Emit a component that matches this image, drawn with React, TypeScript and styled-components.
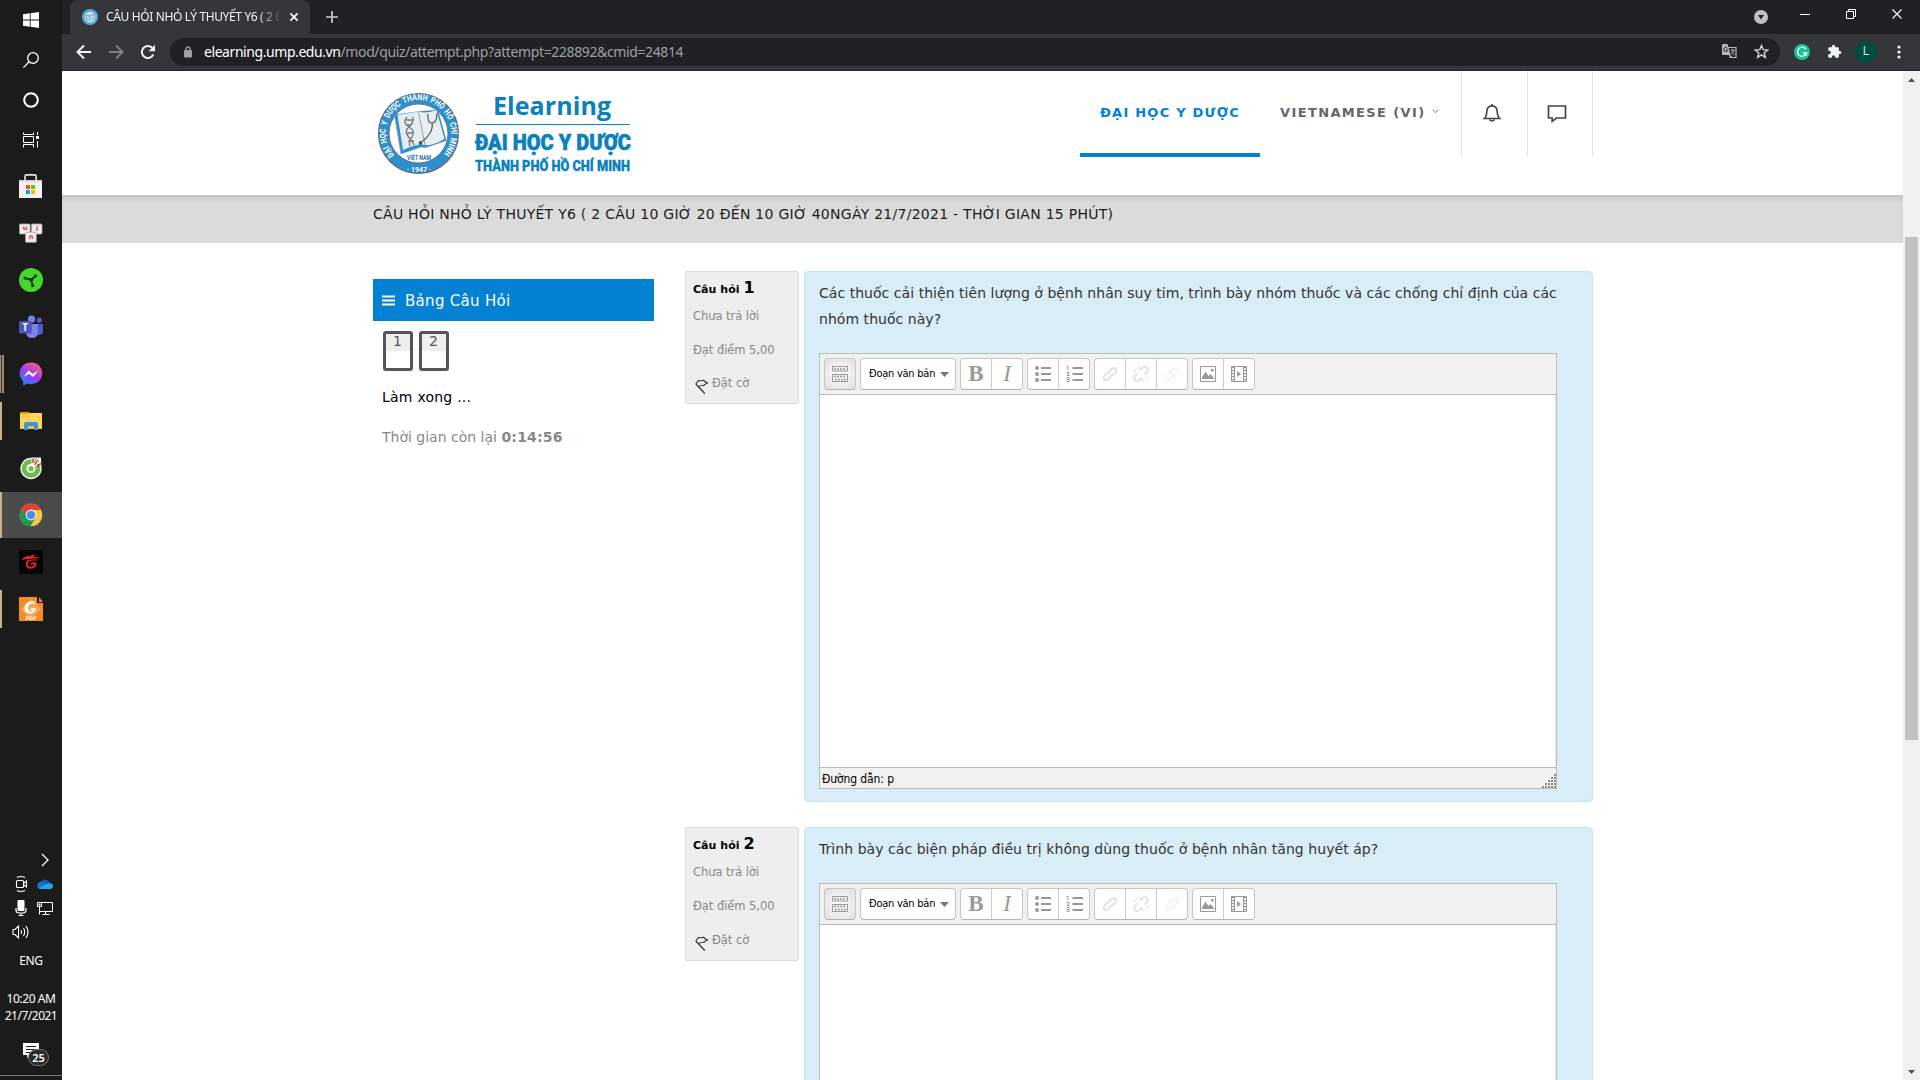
import React from "react";
import styled, { createGlobalStyle, css } from "styled-components";

const VERDANA = '"DejaVu Sans", Verdana, sans-serif';
const TAHOMA = '"DejaVu Sans Condensed", "DejaVu Sans", Tahoma, sans-serif';
const SEGOE = '"Noto Sans", "Open Sans", sans-serif';

const GlobalStyle = createGlobalStyle`
  *, *::before, *::after { box-sizing: border-box; }
  html, body { margin: 0; padding: 0; height: 100%; overflow: hidden; background: #fff; }
  p { margin: 0; }
  svg { display: block; flex: none; overflow: visible; }
`;

/* ---------- shell ---------- */

const Screen = styled.div`
  display: flex;
  width: 1920px;
  height: 1080px;
  overflow: hidden;
`;

const Taskbar = styled.aside`
  flex: none;
  width: 62px;
  height: 1080px;
  display: flex;
  flex-direction: column;
  background: #1b1b1b;
  color: #fff;
  font-family: ${SEGOE};
`;

const SystemSlot = styled.div`
  height: 40px;
  display: flex;
  align-items: center;
  justify-content: center;
`;

const AppList = styled.div`
  padding-top: 2px;
`;

const AppSlot = styled.div<{ $active?: boolean; $open?: number }>`
  height: 47px;
  display: flex;
  align-items: center;
  ${(p) => p.$active && css`background: linear-gradient(#4b4b4b, #4b4b4b) 0 1px / 100% 46px no-repeat;`}
  &::before {
    content: "";
    flex: none;
    width: ${(p) => p.$open ?? 0}px;
    height: ${(p) => (p.$active ? 46 : 38)}px;
    background: ${(p) => (p.$open === 4 ? "linear-gradient(90deg, #a08d75 1px, #3a352e 1px 2px, #9b8b75 2px)" : "#c9b08f")};
  }
  > svg {
    margin-left: ${(p) => 19 - (p.$open ?? 0)}px;
  }
`;

const Tray = styled.div`
  margin-top: auto;
  height: 232px;
  display: flex;
  flex-direction: column;
`;

const TrayGrid = styled.div`
  display: grid;
  grid-template-columns: 24px 24px;
  grid-auto-rows: 24px;
  padding-left: 9px;
  place-items: center;
`;

const TrayText = styled.div<{ $h: number; $ls?: string }>`
  height: ${(p) => p.$h}px;
  line-height: ${(p) => p.$h}px;
  font-size: 12px;
  letter-spacing: ${(p) => p.$ls ?? "0"};
  text-align: center;
  white-space: nowrap;
`;

const Clock = styled.div`
  margin-top: 12px;
`;

const Notifications = styled.div`
  position: relative;
  margin: 19px 0 0 23px;
  width: 24px;
  height: 32px;
`;

const Badge = styled.span`
  position: absolute;
  left: 5px;
  top: 6px;
  width: 21px;
  height: 17px;
  border: 1px solid #777;
  border-radius: 9px;
  background: #2a2a2a;
  font-size: 11px;
  line-height: 15px;
  font-weight: 600;
  text-align: center;
`;

const ShowDesktop = styled.div`
  margin-top: auto;
  height: 5px;
  border-top: 1px solid #777;
`;

/* ---------- browser ---------- */

const Browser = styled.div`
  flex: 1;
  min-width: 0;
  display: flex;
  flex-direction: column;
`;

const TabStrip = styled.div`
  flex: none;
  height: 34px;
  display: flex;
  background: #202124;
  padding-left: 8px;
`;

const Tab = styled.div`
  width: 240px;
  height: 34px;
  display: flex;
  align-items: center;
  padding: 0 12px;
  border-radius: 8px 8px 0 0;
  background: #35363a;
`;

const TabTitle = styled.span`
  margin: 0 8px;
  width: 176px;
  overflow: hidden;
  white-space: nowrap;
  color: #f1f3f4;
  font: 12px/18px ${SEGOE};
  letter-spacing: -0.37px;
  mask-image: linear-gradient(90deg, #000 86%, transparent);
`;

const NewTab = styled.div`
  display: flex;
  align-items: center;
  margin-left: 16px;
`;

const WindowControls = styled.div`
  margin-left: auto;
  display: flex;
  align-items: flex-start;
  padding: 9px 18px 0 0;
`;

const Control = styled.div<{ $gap: number; $drop?: number }>`
  margin: ${(p) => p.$drop ?? 0}px ${(p) => p.$gap}px 0 0;
`;

const Toolbar = styled.div`
  flex: none;
  height: 37px;
  display: flex;
  align-items: center;
  padding: 0 14px 1px 14px;
  background: #35363a;
  border-bottom: 1px solid #232427;
`;

const NavButtons = styled.div`
  display: flex;
  gap: 16px;
`;

const Omnibox = styled.div`
  margin-left: 14px;
  width: 1610px;
  height: 28px;
  display: flex;
  align-items: center;
  padding: 0 11px 0 14px;
  border-radius: 14px;
  background: #202124;
`;

const Url = styled.span`
  margin-left: 12px;
  color: #9aa0a6;
  font: 14px/20px ${SEGOE};
  letter-spacing: -0.38px;
  white-space: nowrap;
  b {
    font-weight: 400;
    color: #fff;
    letter-spacing: -0.43px;
  }
`;

const OmniIcons = styled.div`
  margin-left: auto;
  display: flex;
  gap: 17px;
`;

const Extensions = styled.div`
  display: flex;
  align-items: center;
  margin-left: 14px;
`;

const ExtensionIcon = styled.div`
  margin-right: 17px;
`;

const Avatar = styled.div`
  width: 22px;
  height: 22px;
  margin: 0 20px 0 13px;
  border-radius: 50%;
  background: #004d40;
  color: #d6e4e1;
  text-align: center;
  font: 12px/21px Roboto, sans-serif;
`;

const Viewport = styled.div`
  flex: 1;
  min-height: 0;
  display: flex;
  background: #fff;
`;

const Page = styled.main`
  flex: 1;
  min-width: 0;
  overflow: hidden;
  font-family: ${VERDANA};
`;

const Scrollbar = styled.div`
  flex: none;
  width: 17px;
  display: flex;
  flex-direction: column;
  align-items: center;
  background: #f1f1f1;
  padding: 7px 0 6px;
`;

const Thumb = styled.div`
  width: 13px;
  height: 503px;
  margin: 155px 0 auto;
  background: #c1c1c1;
`;

/* ---------- site header ---------- */

const SiteHeader = styled.header`
  height: 124px;
  padding: 0 310px 0 311px;
  display: flex;
  justify-content: space-between;
  background: #fff;
`;

const Brand = styled.div`
  padding-top: 17px;
`;

const SiteNav = styled.nav`
  display: flex;
  height: 86px;
`;

const NavItem = styled.a<{ $w: number; $active?: boolean; $ls: string }>`
  display: flex;
  width: ${(p) => p.$w}px;
  height: 86px;
  padding: 30px 0 0 20px;
  font-size: 13px;
  line-height: 24px;
  font-weight: 700;
  letter-spacing: ${(p) => p.$ls};
  white-space: nowrap;
  color: ${(p) => (p.$active ? "#0382d3" : "#666")};
  border-bottom: 4px solid ${(p) => (p.$active ? "#0382d3" : "transparent")};
  svg { margin: 8px 0 0 6px; }
`;

const IconCell = styled.div<{ $last?: boolean }>`
  width: 66px;
  height: 86px;
  padding: 30px 6px 0 0;
  display: flex;
  justify-content: center;
  align-items: flex-start;
  border-left: 1px solid #e6e6e6;
  ${(p) => p.$last && css`border-right: 1px solid #e6e6e6;`}
`;

const TitleBand = styled.div`
  height: 48px;
  padding: 7px 0 0 311px;
  background: #dbdbdb;
  box-shadow: inset 0 6px 6px -3px rgba(0, 0, 0, 0.13);
`;

const CourseTitle = styled.h1`
  margin: 0;
  font-size: 14px;
  line-height: 24px;
  font-weight: 400;
  letter-spacing: 0.265px;
  color: #1c1c1c;
  white-space: nowrap;
`;

/* ---------- page body ---------- */

const Columns = styled.div`
  display: flex;
  padding: 28px 0 0 311px;
`;

const SideBlock = styled.section`
  width: 281px;
  margin: 8px 31px 0 0;
`;

const BlockTitle = styled.h2`
  height: 42px;
  margin: 0;
  padding: 1px 0 0 9px;
  display: flex;
  align-items: center;
  gap: 10px;
  background: #0382d3;
  color: #fff;
  font-size: 15px;
  font-weight: 400;
  letter-spacing: 0.3px;
  svg { margin-top: -1px; }
`;

const QuestionLinks = styled.div`
  display: flex;
  gap: 6px;
  padding: 10px 0 0 10px;
`;

const QuestionLink = styled.a`
  width: 30px;
  height: 40px;
  padding-right: 1px;
  border: 3px solid #555;
  border-radius: 3px;
  background: linear-gradient(#eee 17px, #fff 17px);
  color: #555;
  font-size: 14px;
  line-height: 15px;
  text-align: center;
`;

const SideText = styled.p<{ $top: number; $muted?: boolean; $ls: string }>`
  margin-top: ${(p) => p.$top}px;
  padding-left: 9px;
  font-size: 14px;
  line-height: 24px;
  letter-spacing: ${(p) => p.$ls};
  color: ${(p) => (p.$muted ? "#888" : "#000")};
  white-space: nowrap;
  b { letter-spacing: 0.2px; }
`;

const Questions = styled.div`
  display: flex;
  flex-direction: column;
  gap: 25px;
`;

const Question = styled.article`
  display: flex;
  align-items: flex-start;
  gap: 5px;
`;

const InfoBox = styled.div<{ $extra: number }>`
  width: 114px;
  height: ${(p) => 133 + p.$extra}px;
  padding: 7px 0 0 7px;
  border: 1px solid #dcdcdc;
  border-radius: 2px;
  background: #eee;
  color: #888;
  font-size: 11.5px;
  letter-spacing: -0.05px;
`;

const InfoTitle = styled.h3`
  margin: 0;
  height: 18px;
  line-height: 18px;
  font-size: 11px;
  letter-spacing: 0.05px;
  color: #000;
  white-space: nowrap;
  b { font-size: 16px; letter-spacing: 0; }
`;

const InfoLine = styled.div<{ $top: number }>`
  margin-top: ${(p) => p.$top}px;
  height: 16px;
  line-height: 16px;
  display: flex;
  white-space: nowrap;
  svg { margin: 4px 3px 0 2px; }
`;

const Formulation = styled.div`
  width: 789px;
  padding: 8px 35px 12px 14px;
  border: 1px solid #bce8f1;
  border-radius: 4px;
  background: #d9edf7;
`;

const Prompt = styled.p<{ $ls: string }>`
  margin-bottom: 21px;
  font-size: 14px;
  line-height: 26px;
  letter-spacing: ${(p) => p.$ls};
  color: #333;
  span { display: block; white-space: nowrap; }
`;

const Editor = styled.div`
  border: 1px solid #bbb;
  background: #f1f1f1;
`;

const EditorBar = styled.div`
  height: 41px;
  padding: 4px;
  display: flex;
  gap: 4px;
  border-bottom: 1px solid #bbb;
`;

const ButtonGroup = styled.div<{ $pressed?: boolean }>`
  display: flex;
  height: 32px;
  border: 1px solid #c6c6c6;
  border-bottom-color: #b3b3b3;
  border-radius: 4px;
  overflow: hidden;
  background: ${(p) => (p.$pressed ? "radial-gradient(#f6f6f6 30%, #dedede)" : "#fff")};
`;

const EditorButton = styled.div<{ $faded?: number }>`
  width: 30px;
  display: flex;
  align-items: center;
  justify-content: center;
  color: #999;
  & + & { width: 31px; border-left: 1px solid #ccc; }
  svg { opacity: ${(p) => p.$faded ?? 1}; }
`;

const Letter = styled.span<{ $italic?: boolean }>`
  font: ${(p) => (p.$italic ? "italic 400" : "normal 700")} 23px/30px "Liberation Serif", serif;
`;

const FormatSelect = styled.div`
  width: 94px;
  display: flex;
  align-items: center;
  justify-content: space-between;
  padding: 0 6px 0 8px;
  font: 11px/30px ${TAHOMA};
  letter-spacing: -0.25px;
  color: #000;
  white-space: nowrap;
`;

const EditArea = styled.div`
  height: 372px;
  background: #fff;
  border-right: 1px solid #d9edf7;
`;

const StatusBar = styled.div`
  height: 21px;
  display: flex;
  justify-content: space-between;
  align-items: flex-end;
  padding-left: 2px;
  border-top: 1px solid #bbb;
  font: 12px/18px ${TAHOMA};
  letter-spacing: -0.1px;
  color: #000;
`;

/* ---------- drawings ---------- */

const stroke = (w = 1.5, color = "currentColor") => ({ fill: "none", stroke: color, strokeWidth: w });

const WindowsIcon = () => (
  <svg width="16" height="16" viewBox="0 0 16 16" fill="#fff">
    <path d="M0 2.2 6.8 1.3V7.6H0zM7.6 1.2 16 0v7.6H7.6zM0 8.4h6.8v6.3L0 13.8zM7.6 8.4H16V16l-8.4-1.2z" />
  </svg>
);
const SearchIcon = () => (
  <svg width="16" height="16" viewBox="0 0 16 16" {...stroke(1.3, "#fff")}>
    <circle cx="10" cy="6" r="5.3" /><path d="M6.2 9.8.4 15.6" />
  </svg>
);
const CortanaIcon = () => (
  <svg width="16" height="16" viewBox="0 0 16 16" {...stroke(2, "#fff")}><circle cx="8" cy="8" r="6.8" /></svg>
);
const TaskViewIcon = () => (
  <svg width="16" height="16" viewBox="0 0 16 16" {...stroke(1, "#fff")}>
    <path d="M.5.5v2h10v-2M.5 15.5v-3h10v3M.5 4.500h10v6H.5zM14.500 0v3M14.500 9v6.500" /><path d="M13 4h3v3h-3z" fill="#fff" stroke="none" />
  </svg>
);
const StoreIcon = () => (
  <svg width="24" height="24" viewBox="0 0 24 24">
    <path d="M0 6h23v18H0z" fill="#f2f2f2" /><path d="M0 6h23v1.600H0z" fill="#d0d0d0" />
    <path d="M6 7V2.500Q6 .9 7.600.9h8q1.600 0 1.600 1.600V7" {...stroke(1.600, "#e6e6e6")} />
    <path d="M7 11h4v4H7z" fill="#f25022" /><path d="M12 11h4v4h-4z" fill="#7fba00" />
    <path d="M7 16h4v4H7z" fill="#00a4ef" /><path d="M12 16h4v4h-4z" fill="#ffb900" />
  </svg>
);
const KeysIcon = () => (
  <svg width="24" height="20" viewBox="0 0 24 20" fontFamily="DejaVu Sans" fontWeight="700" fontSize="6.500" fill="#ee3030" textAnchor="middle">
    <g fill="#ececec" stroke="#aaa" strokeWidth=".8">
      <rect x=".5" y="1" width="10.600" height="10" rx="1" /><rect x="12.400" y="1" width="10.600" height="10" rx="1" /><rect x="6.500" y="9.300" width="10.800" height="10" rx="1" />
    </g>
    <text x="6" y="7">u</text><text x="18" y="7.500">i</text><text x="12" y="15.800">n</text>
  </svg>
);
const GreenIcon = () => (
  <svg width="24" height="24" viewBox="0 0 24 24">
    <circle cx="12" cy="12" r="12" fill="#44d62c" />
    <path d="M6 10.200 12 12l4.700-4M12 12l1.700 5.500" {...stroke(1.800, "#17301a")} />
    <path d="m8.700 10.500 6.300-.7-2 4.600z" fill="#17301a" />
    <circle cx="6" cy="10" r="1.500" fill="#17301a" /><circle cx="16.700" cy="7.800" r="1.500" fill="#17301a" /><circle cx="13.700" cy="17.600" r="1.600" fill="#17301a" />
  </svg>
);
const TeamsIcon = () => (
  <svg width="24" height="24" viewBox="0 0 24 24">
    <circle cx="12.500" cy="4.200" r="3.600" fill="#7b83eb" /><circle cx="20.300" cy="5.200" r="2.600" fill="#5059c9" />
    <path d="M16 9h8v7q0 4-4 4h-3z" fill="#5059c9" /><path d="M7 9h12v8q0 6-6 6t-6-6z" fill="#7b83eb" />
    <rect y="6" width="12.500" height="12.500" rx="1" fill="#4b53bc" />
    <text x="6.200" y="16" fontSize="10" fontWeight="700" fill="#fff" textAnchor="middle" fontFamily="Open Sans">T</text>
  </svg>
);
const MessengerIcon = () => (
  <svg width="24" height="24" viewBox="0 0 24 24">
    <defs><linearGradient id="msg" x1=".15" y1="1" x2=".75" y2="0"><stop offset="0" stopColor="#0a90ff" /><stop offset=".5" stopColor="#9a3cf8" /><stop offset="1" stopColor="#ff6170" /></linearGradient></defs>
    <path d="M12 .4C5.400.4.700 5 .700 11.300c0 3.400 1.300 6 3.500 8v4.200l3.800-2c1.200.400 2.600.600 4 .600 6.600 0 11.200-4.600 11.200-10.800S18.600.4 12 .4z" fill="url(#msg)" />
    <path d="m4.600 15 4.800-6.400 4.400 3.400 5.200-3.600-4.600 6.600-4.400-3.300z" fill="#fff" />
  </svg>
);
const FolderIcon = () => (
  <svg width="24" height="24" viewBox="0 0 24 24">
    <path d="M1 4q0-1 1-1h8l1.500 2H1z" fill="#e6a100" /><path d="M1 5h9l1-1h12v16H1z" fill="#ffd35c" />
    <path d="M5 21v-6q0-2 2-2h10q2 0 2 2v6h-4v-4H9v4z" fill="#3a96dd" /><path d="M1 19h4v1H1zM19 19h4v1h-4zM9 17h6v3H9z" fill="#f2c23c" />
  </svg>
);
const CocCocIcon = () => (
  <svg width="24" height="24" viewBox="0 0 24 24">
    <circle cx="12" cy="12.500" r="10" fill="#6cbd45" stroke="#f4f4f4" strokeWidth="1.300" />
    <path d="m12 10 .8-8.500H22l.3 8.500z" fill="#f4f4f4" />
    <path d="m13.500 3 1 0-.5 4zM16.500 6.500l3-2.500-3.500 5zM18 9l4-1.500-3 3z" stroke="#f04a2a" strokeWidth=".9" />
    <path d="m16 3 2.500-.8L15 8z" fill="#6cbd45" />
    <circle cx="12" cy="12.500" r="3.600" fill="#6cbd45" stroke="#fff" strokeWidth="2" />
  </svg>
);
const ChromeIcon = () => (
  <svg width="24" height="24" viewBox="0 0 24 24">
    <circle cx="12" cy="12" r="11.300" fill="#fbc93d" />
    <path d="M2.200 6.300A11.300 11.300 0 0 1 22.200 7H12l-5 8z" fill="#dc4437" />
    <path d="M2.200 6.300A11.300 11.300 0 0 0 11.500 23.300L16.600 14.500 7.500 14.500z" fill="#159c58" />
    <circle cx="12" cy="12" r="5.400" fill="#f1f1f1" /><circle cx="12" cy="12" r="4.300" fill="#4c8bf5" />
  </svg>
);
const GarenaIcon = () => (
  <svg width="24" height="24" viewBox="0 0 24 24">
    <rect width="24" height="24" rx="2" fill="#050505" />
    <path d="M3 10.500C4 7 7 5.600 11 6L16 4 14.500 6.500c3 .2 5.500 1 7.500 2.200-5-.9-8-.5-10.500.4-3-.5-6-.1-8.500 1.400z" fill="#e3202b" />
    <path d="M10 10.300C7 12 6.500 17.500 11.500 17.700c3.200 0 5-1.300 5-4.200H12" {...stroke(1.900, "#e3202b")} />
    <path d="M10 10.800q4-1.500 8-.8" {...stroke(1, "#e3202b")} />
  </svg>
);
const FoxitIcon = () => (
  <svg width="24" height="24" viewBox="0 0 24 24">
    <path d="M0 0h18v6h6v18H0z" fill="#f68b1f" /><path d="m20 0 4 5h-4z" fill="#f68b1f" /><path d="m2 12 10-10 10 10-7 7H8z" fill="#f9a752" />
    <path d="M16.500 5.200c-5-2.600-11 .8-11 6 0 6.800 10.500 7.200 11.500 0h-5l-1 2h3c-1 2.200-5 1.800-5-2 0-3.600 3.500-5.500 6.500-4.300z" fill="#fff" />
    <text x="12" y="22.600" fontSize="5" fontWeight="700" fill="#fff" textAnchor="middle" fontFamily="DejaVu Sans">PDF</text>
  </svg>
);

const TrayChevron = () => <svg width="8" height="14" viewBox="0 0 8 14" {...stroke(1.300, "#fff")}><path d="m1 1 6 6-6 6" /></svg>;
const CameraIcon = () => (
  <svg width="16" height="18" viewBox="0 0 16 18" {...stroke(1.100, "#fff")}>
    <rect x="3.500" y="5.500" width="7" height="7" rx="1" /><path d="M10.500 8.500 13.500 6v6l-3-2.300M4 2.500q4-2 8 0M4 15.500q4 2 8 0" />
  </svg>
);
const CloudIcon = () => (
  <svg width="16" height="16" viewBox="0 0 16 16">
    <path d="M4 6a5 5 0 0 1 9 1l-7 5z" fill="#0f5db5" /><path d="M.3 10q0-4 4.700-4.200l5 5-8 2Q.3 12 .3 10z" fill="#1577cc" />
    <path d="M2 12.500 9 8q7-2 7 2.300 0 2.700-3 2.700H3z" fill="#2aa4ec" />
  </svg>
);
const MicIcon = () => (
  <svg width="12" height="18" viewBox="0 0 12 18" {...stroke(1.200, "#fff")}>
    <rect x="2.500" y="1" width="7" height="11" rx="1" fill="#fff" stroke="none" /><path d="M1 9v2q0 3 3 3h4q3 0 3-3V9M6 14v3M3.500 16.500h5" />
  </svg>
);
const NetworkIcon = () => (
  <svg width="16" height="16" viewBox="0 0 16 16" {...stroke(1, "#fff")}>
    <path d="M4.500 2.500h11v9H3M.5 2.500h4v4h-4zM2.500 6.500v8M8.500 12v2.500M5.500 14.500h7" /><path d="M2 4h1v1H2z" fill="#fff" />
  </svg>
);
const SpeakerIcon = () => (
  <svg width="18" height="14" viewBox="0 0 18 14" {...stroke(1.100, "#fff")}>
    <path d="M1 4.500h2L6.500 1v12L3 9.500H1zM9 5q1 2 0 4M11.500 3q2.300 4 0 8M14 1q4 6 0 12" />
  </svg>
);
const NoteIcon = () => (
  <svg width="16" height="16" viewBox="0 0 16 16"><path d="M0 0h16v12H7l-3 3v-3H0z" fill="#fff" /><path d="M3 3.500h10M3 6.500h10M3 9.500h10" stroke="#1b1b1b" /></svg>
);

const Favicon = () => (
  <svg width="16" height="16" viewBox="0 0 16 16">
    <circle cx="8" cy="8" r="8" fill="#58a9dc" /><circle cx="8" cy="8" r="5.300" fill="#d9e8f2" />
    <path d="M4 6.500 5.300 11h3L12 9l-.6-3.500-3 .8-.8 3-.8-3.200z" {...stroke(1, "#5799c4")} />
  </svg>
);
const CrossIcon = ({ s, w }: { s: number; w: number }) => (
  <svg width={s} height={s} viewBox="0 0 10 10" {...stroke(w, "#fff")}><path d="m.5.5 9 9M9.500.5l-9 9" /></svg>
);
const PlusIcon = () => <svg width="12" height="12" viewBox="0 0 12 12" {...stroke(1.700, "#c9cbce")}><path d="M6 0v12M0 6h12" /></svg>;
const DropCircle = () => (
  <svg width="14" height="14" viewBox="0 0 14 14"><circle cx="7" cy="7" r="7" fill="#bdc1c6" /><path d="M4 5h6L7 9.500z" fill="#202124" /></svg>
);
const MinIcon = () => <svg width="10" height="10" viewBox="0 0 10 10"><path d="M0 5h10v1H0z" fill="#fff" /></svg>;
const RestoreIcon = () => (
  <svg width="10" height="10" viewBox="0 0 10 10" {...stroke(1, "#fff")}><path d="M.5 2.500h7v7h-7zM2.500 2.500v-2h7v7h-2" /></svg>
);
const ArrowIcon = ({ flip }: { flip?: boolean }) => (
  <svg width="16" height="16" viewBox="0 0 16 16" {...stroke(2, flip ? "#7d8084" : "#f1f3f4")}>
    <path d={flip ? "M1 8h13M8 1.500 14.500 8 8 14.500" : "M15 8H2M8 1.500 1.500 8 8 14.500"} />
  </svg>
);
const ReloadIcon = () => (
  <svg width="16" height="16" viewBox="0 0 16 16"><path d="M13.300 10.500A6 6 0 1 1 12.200 3.800" {...stroke(2, "#f1f3f4")} /><path d="M15 .8v6.400H8.600z" fill="#f1f3f4" /></svg>
);
const LockIcon = () => (
  <svg width="8" height="12" viewBox="0 0 8 12"><rect y="4" width="8" height="7.500" rx="1" fill="#9aa0a6" /><path d="M2 4.500V3a2 2 0 0 1 4 0v1.500" {...stroke(1.300, "#9aa0a6")} /></svg>
);
const TranslateIcon = () => (
  <svg width="15" height="15" viewBox="0 0 15 15">
    <path d="M6 3.500h8v10H8.500L7 10" {...stroke(1.200, "#b4b8bc")} /><path d="M0 1q0-1 1-1h4.500l3 11H1q-1 0-1-1z" fill="#b4b8bc" />
    <path d="M5.300 4.300A2 2 0 1 0 5.600 6H4" {...stroke(1, "#202124")} /><path d="M8.300 6h4.500M10.500 5v1M12 6q-.7 3-3 4.500M9.500 7.500q1 2 3 3.300" {...stroke(1, "#b4b8bc")} />
    <path d="m8.500 11-1 3 2.500-1z" fill="#b4b8bc" />
  </svg>
);
const StarIcon = () => (
  <svg width="15" height="15" viewBox="0 0 15 15" {...stroke(1.400, "#d3d5d8")}><path d="m7.500 1.500 1.700 4.200 4.500.3-3.500 2.900 1.200 4.500-3.900-2.500-3.900 2.500 1.200-4.500L1.300 6l4.500-.3z" /></svg>
);
const GrammarlyIcon = () => (
  <svg width="16" height="16" viewBox="0 0 16 16"><circle cx="8" cy="8" r="8" fill="#15c39a" /><path d="M11.800 5A4.600 4.600 0 1 0 12.500 9H9M12.500 8.500V11.500" {...stroke(1.400, "#fff")} /></svg>
);
const PuzzleIcon = () => (
  <svg width="15" height="15" viewBox="0 0 24 24" fill="#f1f3f4">
    <path d="M20.500 11H19V7a2 2 0 0 0-2-2h-4V3.500a2.500 2.500 0 0 0-5 0V5H4a2 2 0 0 0-2 2v3.800h1.500a2.700 2.700 0 0 1 0 5.400H2V20a2 2 0 0 0 2 2h3.800v-1.500a2.700 2.700 0 0 1 5.400 0V22H17a2 2 0 0 0 2-2v-4h1.500a2.500 2.500 0 0 0 0-5z" />
  </svg>
);
const DotsIcon = () => (
  <svg width="4" height="14" viewBox="0 0 4 14" fill="#f1f3f4"><circle cx="2" cy="2" r="1.600" /><circle cx="2" cy="7" r="1.600" /><circle cx="2" cy="12" r="1.600" /></svg>
);
const ScrollArrow = ({ down }: { down?: boolean }) => (
  <svg width="7" height="4" viewBox="0 0 7 4"><path d={down ? "M0 0h7L3.500 4z" : "M0 4h7L3.500 0z"} fill="#505050" /></svg>
);

const Logo = () => (
  <svg width="262" height="90" viewBox="0 0 262 90">
    <defs>
      <path id="ring" d="M21.200 67A32.800 32.800 0 1 1 69.800 67" />
    </defs>
    <circle cx="45.500" cy="45.500" r="40" fill="#2b8fd0" stroke="#6b6b6b" strokeWidth="1.200" />
    <circle cx="45.500" cy="45.500" r="29.500" fill="#fff" stroke="#6b6b6b" strokeWidth=".9" />
    <text fontFamily="Roboto, sans-serif" fontWeight="700" fontSize="8.500" fill="#fff" wordSpacing="1.500">
      <textPath href="#ring" textLength="149" lengthAdjust="spacingAndGlyphs">ĐẠI HỌC Y DƯỢC THÀNH PHỐ HỒ CHÍ MINH</textPath>
    </text>
    <path d="m21.500 27 4.500-1 18-2.500 21-1.800 8.500 31-21 7-4.500-.5L28 66z" fill="#2b8fd0" />
    <path d="m24.500 27 21-3.500L52 57q-6-2-22 5z" fill="#e4edf0" />
    <path d="M45.500 23.500Q54 26 63.500 22l8 29Q60 58 52 57z" fill="#e9eff1" />
    <path d="M45.500 24 52 57M21.500 27 28 66" stroke="#8b9ba4" strokeWidth=".8" fill="none" />
    <path d="M34 29q-5 6 2 10t3 10-2 9M40 29q1 6-4 10t-1 9 6 9M33.500 32h6M34 37h4M34.500 45h5M35 53h6" stroke="#777" strokeWidth="1.300" fill="none" />
    <path d="M55 26q-1 9 4 9t5-10M59 35q1 5-2 10t-6 7-3 3" stroke="#555" strokeWidth="1.200" fill="none" />
    <circle cx="47.500" cy="55" r="1.900" fill="#555" />
    <g fontFamily="Roboto, sans-serif" fontWeight="700" textAnchor="middle">
      <text x="46" y="72.200" fontSize="6.500" fill="#2378b8" textLength="24" lengthAdjust="spacingAndGlyphs">VIỆT NAM</text>
      <text x="46" y="84" fontSize="7" fill="#fff">· 1947 ·</text>
    </g>
    <g fill="#0a80bd" stroke="#0a80bd" fontWeight="700">
      <text x="120" y="27" fontFamily="Open Sans, sans-serif" fontSize="25" strokeWidth="0" textLength="118" lengthAdjust="spacing">Elearning</text>
      <path d="M103 36.500h154" strokeWidth="1.200" />
      <text x="102" y="62" fontFamily="Roboto, sans-serif" fontWeight="900" fontSize="22.500" strokeWidth=".6" textLength="156" lengthAdjust="spacingAndGlyphs">ĐẠI HỌC Y DƯỢC</text>
      <text x="102" y="83" fontFamily="Roboto, sans-serif" fontWeight="900" fontSize="14.500" strokeWidth=".3" textLength="155" lengthAdjust="spacingAndGlyphs">THÀNH PHỐ HỒ CHÍ MINH</text>
    </g>
  </svg>
);

const ChevronDown = () => <svg width="7" height="5" viewBox="0 0 7 5" {...stroke(1, "#777")}><path d="m.5.7 3 3 3-3" /></svg>;
const BellIcon = () => (
  <svg width="18" height="22" viewBox="0 0 18 22" {...stroke(1.700, "#444")}>
    <path d="M1.500 17.500q2.200-2 2.200-6Q3.700 4.800 9 4.800t5.300 6.700q0 4 2.200 6z" /><path d="M9 3v2M6.500 18.500q2.500 3 5 0" />
  </svg>
);
const ChatIcon = () => (
  <svg width="20" height="22" viewBox="0 0 20 22" {...stroke(1.700, "#444")}><path d="M1.500 5h17v12H9.500L5.200 20.300V17H1.500z" /></svg>
);
const MenuIcon = () => <svg width="13" height="11" viewBox="0 0 13 11" fill="#fff"><path d="M0 .5h13v2H0zM0 4.500h13v2H0zM0 8.500h13v2H0z" /></svg>;
const FlagIcon = () => (
  <svg width="14" height="15" viewBox="0 0 14 15" {...stroke(1.200, "#333")}>
    <path d="M.8 5 3.500 1.500q2 .6 5-.3 1.500 2.300 4.500 2.800-3.500 1.200-4 2.300Q6 6 3.500 7.800M.8 5l9 9.500" />
  </svg>
);

const KeyboardIcon = () => (
  <svg width="16" height="16" viewBox="0 0 16 16" {...stroke(1, "#999")}>
    <path d="M.5.500h15v4.500H.5zM.5 8.500h15v7H.5z" /><path d="M2 3h12M2 10.500h12M3 13.500h11" strokeWidth="1.700" strokeDasharray="2 1" />
  </svg>
);
const Caret = () => <svg width="9" height="5" viewBox="0 0 9 5"><path d="M0 0h9L4.500 5z" fill="#777" /></svg>;
const BulletsIcon = () => (
  <svg width="16" height="18" viewBox="0 0 16 18" fill="currentColor">
    <circle cx="2" cy="3" r="2" /><circle cx="2" cy="9" r="2" /><circle cx="2" cy="15" r="2" /><path d="M6 2h10v2H6zM6 8h10v2H6zM6 14h10v2H6z" />
  </svg>
);
const NumbersIcon = () => (
  <svg width="17" height="18" viewBox="0 0 17 18" {...stroke(1)}>
    <path d="M.5 1.500h1.500v4M.5 7.500h2.500v1.500l-2 1.500h2.500M.5 12.500h2.500v4H.5M.5 14.500h2.500" /><path d="M6.500 3H17M6.500 9H17M6.500 15H17" strokeWidth="2" />
  </svg>
);
const chain = "M7 5.500 9.800 2.700a2.600 2.600 0 0 1 3.700 3.700L10.700 9.200Q9.500 10.300 7.500 9.500M9 10.500 6.200 13.300a2.600 2.600 0 0 1-3.700-3.700L5.300 6.800Q6.500 5.700 8.500 6.500";
const LinkIcon = () => <svg width="16" height="16" viewBox="0 0 16 16" {...stroke(2)}><path d={chain} /></svg>;
const UnlinkIcon = () => (
  <svg width="16" height="16" viewBox="0 0 16 16" {...stroke(2)}>
    <path d="M6.800 4.500 9.300 2A2.900 2.900 0 0 1 14 6.300L11.500 8.800M9.200 11.500 6.700 14A2.900 2.900 0 0 1 2 9.700L4.500 7.200" /><path d="M2 1.500 4 4M6 0v3M0 5h3M14 14.500 12 12.500M10 16v-3M16 11h-3" strokeWidth="1" />
  </svg>
);
const NoLinkIcon = () => <svg width="16" height="16" viewBox="0 0 16 16" {...stroke(2)}><path d={chain} /><path d="m4 3 8 10" strokeWidth="1.500" /></svg>;
const ImageIcon = () => (
  <svg width="16" height="16" viewBox="0 0 16 16"><path d="M.5.500h15v15H.5z" {...stroke(1)} /><path d="M2 13V11.500L5.500 5.500 8.500 10l2-2L14 12v1zM11 3h2.500v2.500H11z" fill="currentColor" /></svg>
);
const MediaIcon = () => (
  <svg width="16" height="16" viewBox="0 0 16 16" {...stroke(1)}>
    <path d="M.5.500h15v15H.5zM3.500.500v15M12.500.500v15" /><path d="M2 1v14M14 1v14" strokeWidth="3" strokeDasharray="1.200 1.800" /><path d="m6 5 4 3-4 3z" fill="currentColor" stroke="none" />
  </svg>
);
const GRIP = [1, 2, 3, 4, 5];
const ResizeGrip = () => (
  <svg width="14" height="14" viewBox="0 0 14 14" fill="#8c8c8c">
    {GRIP.map((row) => GRIP.slice(5 - row).map((col) => <rect key={`${row}-${col}`} x={(col - 1) * 3} y={(row - 1) * 3} width="2" height="2" />))}
  </svg>
);

/* ---------- composition ---------- */

const APPS: { icon: React.ReactNode; open?: number; active?: boolean }[] = [
  { icon: <StoreIcon /> },
  { icon: <KeysIcon /> },
  { icon: <GreenIcon /> },
  { icon: <TeamsIcon /> },
  { icon: <MessengerIcon />, open: 4 },
  { icon: <FolderIcon />, open: 2 },
  { icon: <CocCocIcon /> },
  { icon: <ChromeIcon />, open: 2, active: true },
  { icon: <GarenaIcon /> },
  { icon: <FoxitIcon />, open: 2 },
];

const RichEditor = () => (
  <Editor>
    <EditorBar>
      <ButtonGroup $pressed><EditorButton><KeyboardIcon /></EditorButton></ButtonGroup>
      <ButtonGroup><FormatSelect>Đoạn văn bản<Caret /></FormatSelect></ButtonGroup>
      <ButtonGroup>
        <EditorButton><Letter>B</Letter></EditorButton>
        <EditorButton><Letter $italic>I</Letter></EditorButton>
      </ButtonGroup>
      <ButtonGroup>
        <EditorButton><BulletsIcon /></EditorButton>
        <EditorButton><NumbersIcon /></EditorButton>
      </ButtonGroup>
      <ButtonGroup>
        <EditorButton $faded={0.28}><LinkIcon /></EditorButton>
        <EditorButton $faded={0.28}><UnlinkIcon /></EditorButton>
        <EditorButton $faded={0.1}><NoLinkIcon /></EditorButton>
      </ButtonGroup>
      <ButtonGroup>
        <EditorButton><ImageIcon /></EditorButton>
        <EditorButton><MediaIcon /></EditorButton>
      </ButtonGroup>
    </EditorBar>
    <EditArea />
    <StatusBar>Đường dẫn: p<ResizeGrip /></StatusBar>
  </Editor>
);

const QuestionItem = ({ no, lines, ls, extra = 0 }: { no: number; lines: string[]; ls: string; extra?: number }) => (
  <Question>
    <InfoBox $extra={extra}>
      <InfoTitle>Câu hỏi <b>{no}</b></InfoTitle>
      <InfoLine $top={11}>Chưa trả lời</InfoLine>
      <InfoLine $top={18}>Đạt điểm 5,00</InfoLine>
      <InfoLine $top={17 + extra}><FlagIcon />Đặt cờ</InfoLine>
    </InfoBox>
    <Formulation>
      <Prompt $ls={ls}>{lines.map((l) => <span key={l}>{l}</span>)}</Prompt>
      <RichEditor />
    </Formulation>
  </Question>
);

export default function App() {
  return (
    <Screen>
      <GlobalStyle />
      <Taskbar>
        <SystemSlot><WindowsIcon /></SystemSlot>
        <SystemSlot><SearchIcon /></SystemSlot>
        <SystemSlot><CortanaIcon /></SystemSlot>
        <SystemSlot><TaskViewIcon /></SystemSlot>
        <AppList>
          {APPS.map((a, i) => <AppSlot key={i} $open={a.open} $active={a.active}>{a.icon}</AppSlot>)}
        </AppList>
        <Tray>
          <TrayGrid>
            <span /><TrayChevron />
            <CameraIcon /><CloudIcon />
            <MicIcon /><NetworkIcon />
            <SpeakerIcon />
          </TrayGrid>
          <TrayText $h={34} $ls="-0.4px">ENG</TrayText>
          <Clock>
            <TrayText $h={17} $ls="-0.4px">10:20 AM</TrayText>
            <TrayText $h={17} $ls="-0.5px">21/7/2021</TrayText>
          </Clock>
          <Notifications><NoteIcon /><Badge>25</Badge></Notifications>
          <ShowDesktop />
        </Tray>
      </Taskbar>

      <Browser>
        <TabStrip>
          <Tab>
            <Favicon />
            <TabTitle>CÂU HỎI NHỎ LÝ THUYẾT Y6 ( 2 CÂU</TabTitle>
            <CrossIcon s={8} w={2.2} />
          </Tab>
          <NewTab><PlusIcon /></NewTab>
          <WindowControls>
            <Control $gap={32} $drop={1}><DropCircle /></Control>
            <Control $gap={36}><MinIcon /></Control>
            <Control $gap={36}><RestoreIcon /></Control>
            <Control $gap={0}><CrossIcon s={10} w={1.1} /></Control>
          </WindowControls>
        </TabStrip>
        <Toolbar>
          <NavButtons><ArrowIcon /><ArrowIcon flip /><ReloadIcon /></NavButtons>
          <Omnibox>
            <LockIcon />
            <Url><b>elearning.ump.edu.vn</b>/mod/quiz/attempt.php?attempt=228892&amp;cmid=24814</Url>
            <OmniIcons><TranslateIcon /><StarIcon /></OmniIcons>
          </Omnibox>
          <Extensions>
            <ExtensionIcon><GrammarlyIcon /></ExtensionIcon>
            <PuzzleIcon />
            <Avatar>L</Avatar>
            <DotsIcon />
          </Extensions>
        </Toolbar>

        <Viewport>
          <Page>
            <SiteHeader>
              <Brand><Logo /></Brand>
              <SiteNav>
                <NavItem $w={180} $active $ls="1.23px">ĐẠI HỌC Y DƯỢC</NavItem>
                <NavItem $w={201} $ls="1.37px">VIETNAMESE (VI)<ChevronDown /></NavItem>
                <IconCell><BellIcon /></IconCell>
                <IconCell $last><ChatIcon /></IconCell>
              </SiteNav>
            </SiteHeader>
            <TitleBand>
              <CourseTitle>CÂU HỎI NHỎ LÝ THUYẾT Y6 ( 2 CÂU 10 GIỜ 20 ĐẾN 10 GIỜ 40NGÀY 21/7/2021 - THỜI GIAN 15 PHÚT)</CourseTitle>
            </TitleBand>
            <Columns>
              <SideBlock>
                <BlockTitle><MenuIcon />Bảng Câu Hỏi</BlockTitle>
                <QuestionLinks><QuestionLink>1</QuestionLink><QuestionLink>2</QuestionLink></QuestionLinks>
                <SideText $top={14} $ls="0.23px">Làm xong ...</SideText>
                <SideText $top={16} $muted $ls="0px">Thời gian còn lại <b>0:14:56</b></SideText>
              </SideBlock>
              <Questions>
                <QuestionItem
                  no={1}
                  ls="0.04px"
                  lines={["Các thuốc cải thiện tiên lượng ở bệnh nhân suy tim, trình bày nhóm thuốc và các chống chỉ định của các", "nhóm thuốc này?"]}
                />
                <QuestionItem no={2} extra={1} ls="0.05px" lines={["Trình bày các biện pháp điều trị không dùng thuốc ở bệnh nhân tăng huyết áp?"]} />
              </Questions>
            </Columns>
          </Page>
          <Scrollbar><ScrollArrow /><Thumb /><ScrollArrow down /></Scrollbar>
        </Viewport>
      </Browser>
    </Screen>
  );
}
